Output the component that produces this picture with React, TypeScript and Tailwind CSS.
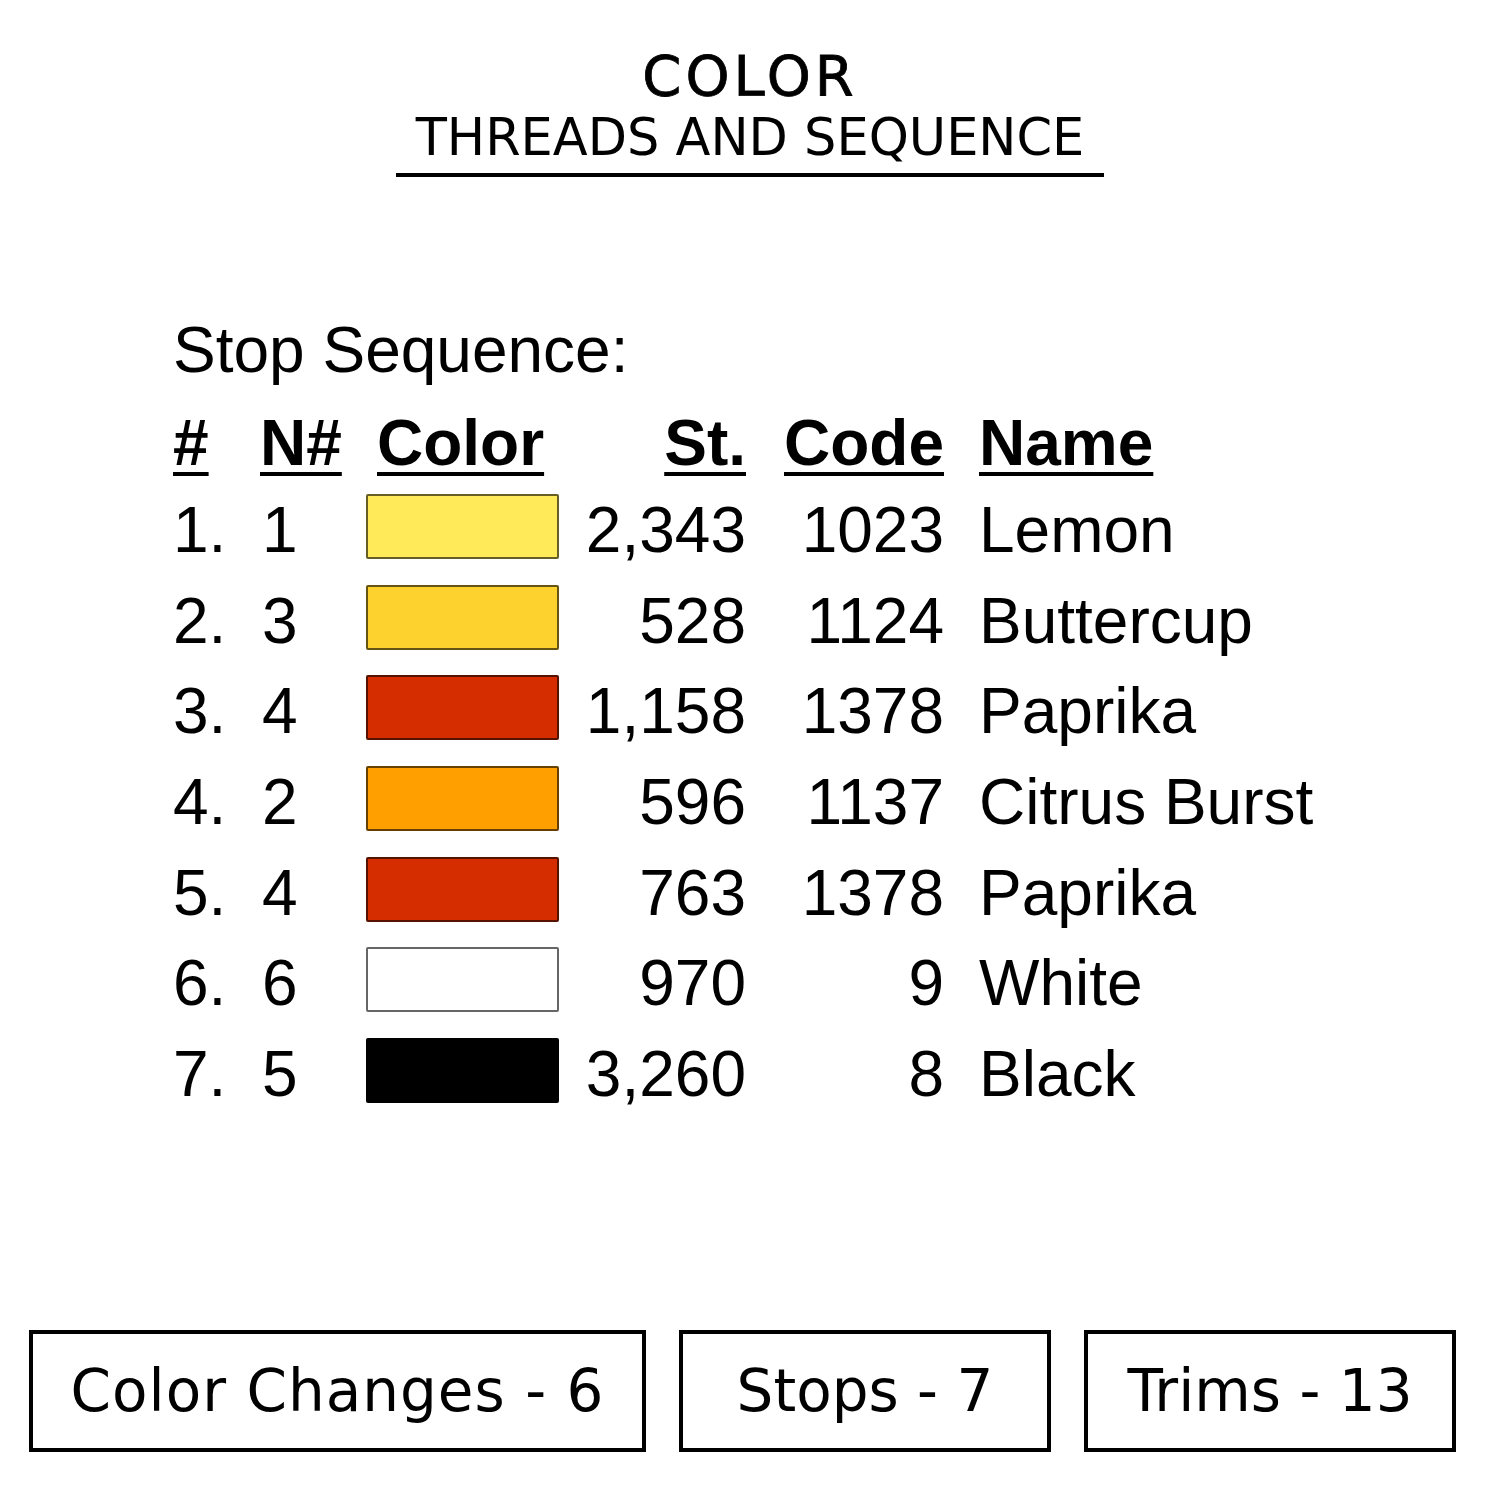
const rows = [
  { n: '1.', needle: '1', color: 'bg-[#ffeb5a]', st: '2,343', code: '1023', name: 'Lemon' },
  { n: '2.', needle: '3', color: 'bg-[#fdd22f]', st: '528', code: '1124', name: 'Buttercup' },
  { n: '3.', needle: '4', color: 'bg-[#d52d00]', st: '1,158', code: '1378', name: 'Paprika' },
  { n: '4.', needle: '2', color: 'bg-[#ffa000]', st: '596', code: '1137', name: 'Citrus Burst' },
  { n: '5.', needle: '4', color: 'bg-[#d52d00]', st: '763', code: '1378', name: 'Paprika' },
  { n: '6.', needle: '6', color: 'bg-white', st: '970', code: '9', name: 'White' },
  { n: '7.', needle: '5', color: 'bg-black', st: '3,260', code: '8', name: 'Black' },
];

const cols = 'grid grid-cols-[87px_106px_193px_187px_198px_1fr]';
const hd = 'underline decoration-[4px] underline-offset-[7px]';

export default function App() {
  return (
    <div className="w-[1500px] h-[1500px] bg-white text-black flex flex-col">
      {/* title */}
      <div className="flex flex-col items-center pt-[48px] font-['DejaVu_Sans',sans-serif]">
        <h1 className="text-[56px] leading-none font-normal tracking-[4px] [-webkit-text-stroke:0.8px_black]">COLOR</h1>
        <div className="mt-[8px] px-[20px] pb-[10px] border-b-4 border-black">
          <h2 className="text-[51px] leading-none font-normal">THREADS AND SEQUENCE</h2>
        </div>
      </div>

      {/* stop sequence table */}
      <div className="pl-[173px] mt-[133px] font-['Liberation_Sans',Arial,sans-serif] text-[64px]">
        <p className="leading-[80px]">Stop Sequence:</p>

        <div className={`${cols} mt-[13px] h-[80px] leading-[80px] font-bold`}>
          <span><span className={hd}>#</span></span>
          <span><span className={hd}>N#</span></span>
          <span className="pl-[11px]"><span className={hd}>Color</span></span>
          <span className="text-right"><span className={hd}>St.</span></span>
          <span className="text-right"><span className={hd}>Code</span></span>
          <span className="pl-[35px]"><span className={hd}>Name</span></span>
        </div>

        <div className="mt-[2px]">
          {rows.map((r, i) => (
            <div key={i} className={`${cols} h-[90.7px] leading-[90.7px] items-start`}>
              <span>{r.n}</span>
              <span className="pl-[2px]">{r.needle}</span>
              <div className={`mt-[9px] w-[193px] h-[65px] rounded-[2px] border-2 border-[rgba(0,0,0,0.6)] ${r.color}`} />
              <span className="text-right">{r.st}</span>
              <span className="text-right">{r.code}</span>
              <span className="pl-[35px]">{r.name}</span>
            </div>
          ))}
        </div>
      </div>

      {/* counters */}
      <div className="mt-auto mb-[48px] pl-[29px] flex gap-[33px] font-['DejaVu_Sans',sans-serif] text-[58px]">
        <div className="w-[617px] h-[122px] border-4 border-black flex items-center justify-center leading-none tracking-[1px]">Color Changes - 6</div>
        <div className="w-[372px] h-[122px] border-4 border-black flex items-center justify-center leading-none">Stops - 7</div>
        <div className="w-[372px] h-[122px] border-4 border-black flex items-center justify-center leading-none">Trims - 13</div>
      </div>
    </div>
  );
}
